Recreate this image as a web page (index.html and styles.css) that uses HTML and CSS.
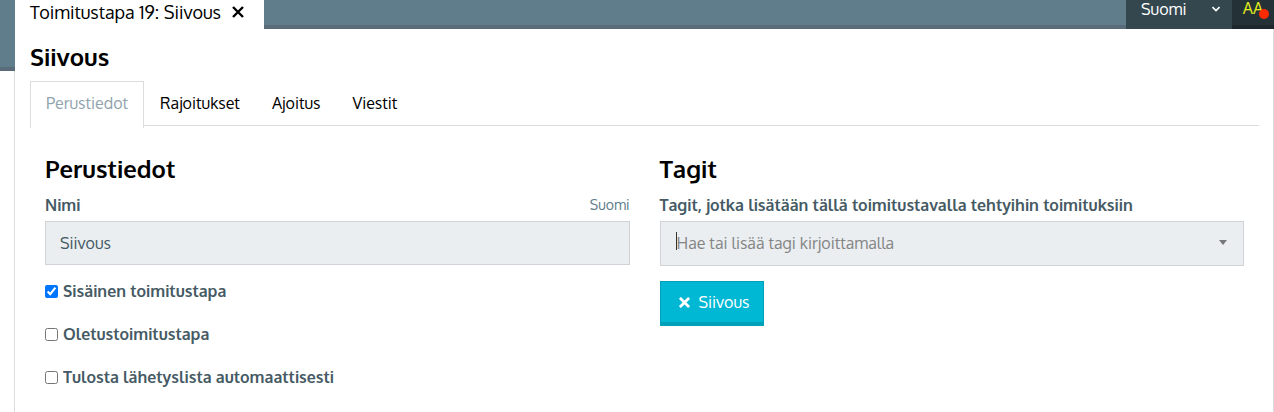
FILE: index.html
```html
<!DOCTYPE html>
<html lang="fi">
  <head>
    <meta charset="UTF-8" />
    <meta name="viewport" content="width=device-width, initial-scale=1.0" />
    <title>Toimitustapa 19: Siivous</title>
    <link rel="stylesheet" href="styles.css">
  </head>
  <body>
    <div class="page">
      <div class="rail"></div>
      <div class="main">
        <header class="topbar">
          <div class="window-tab">
            <span>Toimitustapa 19: Siivous</span>
            <button type="button" class="close" aria-label="Sulje">
              <svg width="12" height="12" viewBox="0 0 12 12"><path d="M1 1L11 11M11 1L1 11" stroke="currentColor" stroke-width="2.4" /></svg>
            </button>
          </div>
          <div class="topbar-right">
            <button type="button" class="language">
              <span>Suomi</span>
              <svg width="8" height="6" viewBox="0 0 8 6"><path d="M0.5 1L4 4.5L7.5 1" fill="none" stroke="currentColor" stroke-width="1.6" /></svg>
            </button>
            <button type="button" class="user">AA<span class="badge"></span></button>
          </div>
        </header>

        <main class="panel">
          <h1>Siivous</h1>
          <nav class="tabs">
            <a href="#perustiedot" class="tab active">Perustiedot</a>
            <a href="#rajoitukset" class="tab">Rajoitukset</a>
            <a href="#ajoitus" class="tab">Ajoitus</a>
            <a href="#viestit" class="tab">Viestit</a>
          </nav>

          <form class="columns">
            <section class="column">
              <h2>Perustiedot</h2>
              <div class="label-row">
                <label for="name">Nimi</label>
                <span class="lang">Suomi</span>
              </div>
              <input type="text" id="name" class="text-input" value="Siivous" />
              <div class="checks">
                <label class="check"><input type="checkbox" checked /><span>Sisäinen toimitustapa</span></label>
                <label class="check"><input type="checkbox" /><span>Oletustoimitustapa</span></label>
                <label class="check"><input type="checkbox" /><span>Tulosta lähetyslista automaattisesti</span></label>
              </div>
            </section>

            <section class="column">
              <h2>Tagit</h2>
              <div class="label-row">
                <label for="tags">Tagit, jotka lisätään tällä toimitustavalla tehtyihin toimituksiin</label>
              </div>
              <div class="tag-select">
                <span class="caret"></span>
                <input type="text" id="tags" placeholder="Hae tai lisää tagi kirjoittamalla" />
                <span class="arrow"></span>
              </div>
              <button type="button" class="tag">
                <svg width="11" height="11" viewBox="0 0 12 12"><path d="M1 1L11 11M11 1L1 11" stroke="currentColor" stroke-width="3" /></svg>
                <span>Siivous</span>
              </button>
            </section>
          </form>
        </main>
      </div>
    </div>
  </body>
</html>
```

FILE: styles.css
```css
* {
  box-sizing: border-box;
}

body {
  margin: 0;
  background-color: #fff;
  color: #000;
  font-family: Oxygen, "Noto Sans", sans-serif;
  font-size: 16px;
  font-weight: 400;
  line-height: 24px;
}

button,
input {
  font: inherit;
  color: inherit;
}

button {
  border: none;
  background: none;
  padding: 0;
  cursor: pointer;
}

.page {
  display: flex;
  align-items: flex-start;
  min-height: 100vh;
}

/* Covers the top of the panel's left border */
.rail {
  position: relative;
  width: 15px;
  height: 71px;
  margin-right: -1px;
  flex-shrink: 0;
  background-color: #607d8b;
  border-bottom: 4px solid #5a6c79;
}

.main {
  flex: 1;
  display: flex;
  flex-direction: column;
  min-height: 100vh;
}

/* Top bar */
.topbar {
  display: flex;
  justify-content: space-between;
  height: 29px;
  padding-left: 1px;
  background-color: #607d8b;
  box-shadow: inset 0 -4px #5a6c79;
}

.window-tab {
  display: flex;
  align-items: center;
  gap: 11px;
  padding: 0 20px 5px 15px;
  background-color: #fff;
  font-size: 18px;
}

.close {
  display: flex;
}

.topbar-right {
  display: flex;
  color: #fff;
}

.language {
  display: flex;
  align-items: center;
  justify-content: space-between;
  width: 106px;
  padding: 0 12px 11px 15px;
  background-color: #34474f;
}

.user {
  position: relative;
  width: 42px;
  padding: 0 0 11px;
  background-color: #243238;
  border-bottom: 4px solid #1d282e;
  color: #e6ee1c;
  line-height: 16px;
}

.badge {
  position: absolute;
  right: 5px;
  top: 9px;
  width: 10px;
  height: 10px;
  border-radius: 50%;
  background-color: #ff2a00;
}

/* Panel */
.panel {
  flex: 1;
  padding: 12px 14px 0 15px;
  border-left: 1px solid #dadcde;
  border-right: 1px solid #dadcde;
}

h1,
h2 {
  margin: 0;
  font-size: 24px;
  font-weight: 600;
  line-height: 32px;
}

.tabs {
  display: flex;
  height: 45px;
  margin-top: 8px;
  border-bottom: 1px solid #dadcde;
}

.tab {
  height: 47px;
  padding: 9px 15px;
  border: 1px solid transparent;
  border-bottom: none;
  color: #000;
  text-decoration: none;
}

.tab.active {
  background-color: #fff;
  border-color: #dadcde;
  color: #90a4ae;
}

.columns {
  display: grid;
  grid-template-columns: 1fr 1fr;
  gap: 30px;
  padding: 27px 15px 0;
}

.label-row {
  display: flex;
  justify-content: space-between;
  margin: 8px 0 4px;
  color: #455a64;
  font-weight: 600;
}

.lang {
  color: #607d8b;
  font-size: 14px;
  font-weight: 400;
}

.text-input,
.tag-select {
  width: 100%;
  height: 44px;
  padding: 0 14px;
  border: 1px solid #d0d4d8;
  border-radius: 0;
  background-color: #eaeef1;
  color: #455a64;
}

.tag-select {
  display: flex;
  align-items: center;
  height: 45px;
  padding: 0 16px 2px 15px;
}

.tag-select input {
  flex: 1;
  padding: 0;
  border: none;
  outline: none;
  background: none;
}

.tag-select input::placeholder {
  color: #858585;
}

.caret {
  width: 1px;
  height: 18px;
  margin-bottom: 4px;
  background-color: #333;
}

.arrow {
  border: 4px solid transparent;
  border-top: 5px solid #777;
  border-bottom: none;
}

.checks {
  display: flex;
  flex-direction: column;
  gap: 19px;
  margin-top: 14px;
}

.check {
  display: flex;
  align-items: center;
  gap: 5px;
  color: #455a64;
  font-weight: 600;
}

.check input {
  width: 13px;
  height: 13px;
  margin: 0;
}

.tag {
  display: flex;
  align-items: center;
  gap: 9px;
  height: 45px;
  margin-top: 15px;
  padding: 0 14px 0 18px;
  border: 1px solid #00a0b8;
  border-bottom-width: 4px;
  background-color: #00b8d4;
  color: #fff;
}
```
